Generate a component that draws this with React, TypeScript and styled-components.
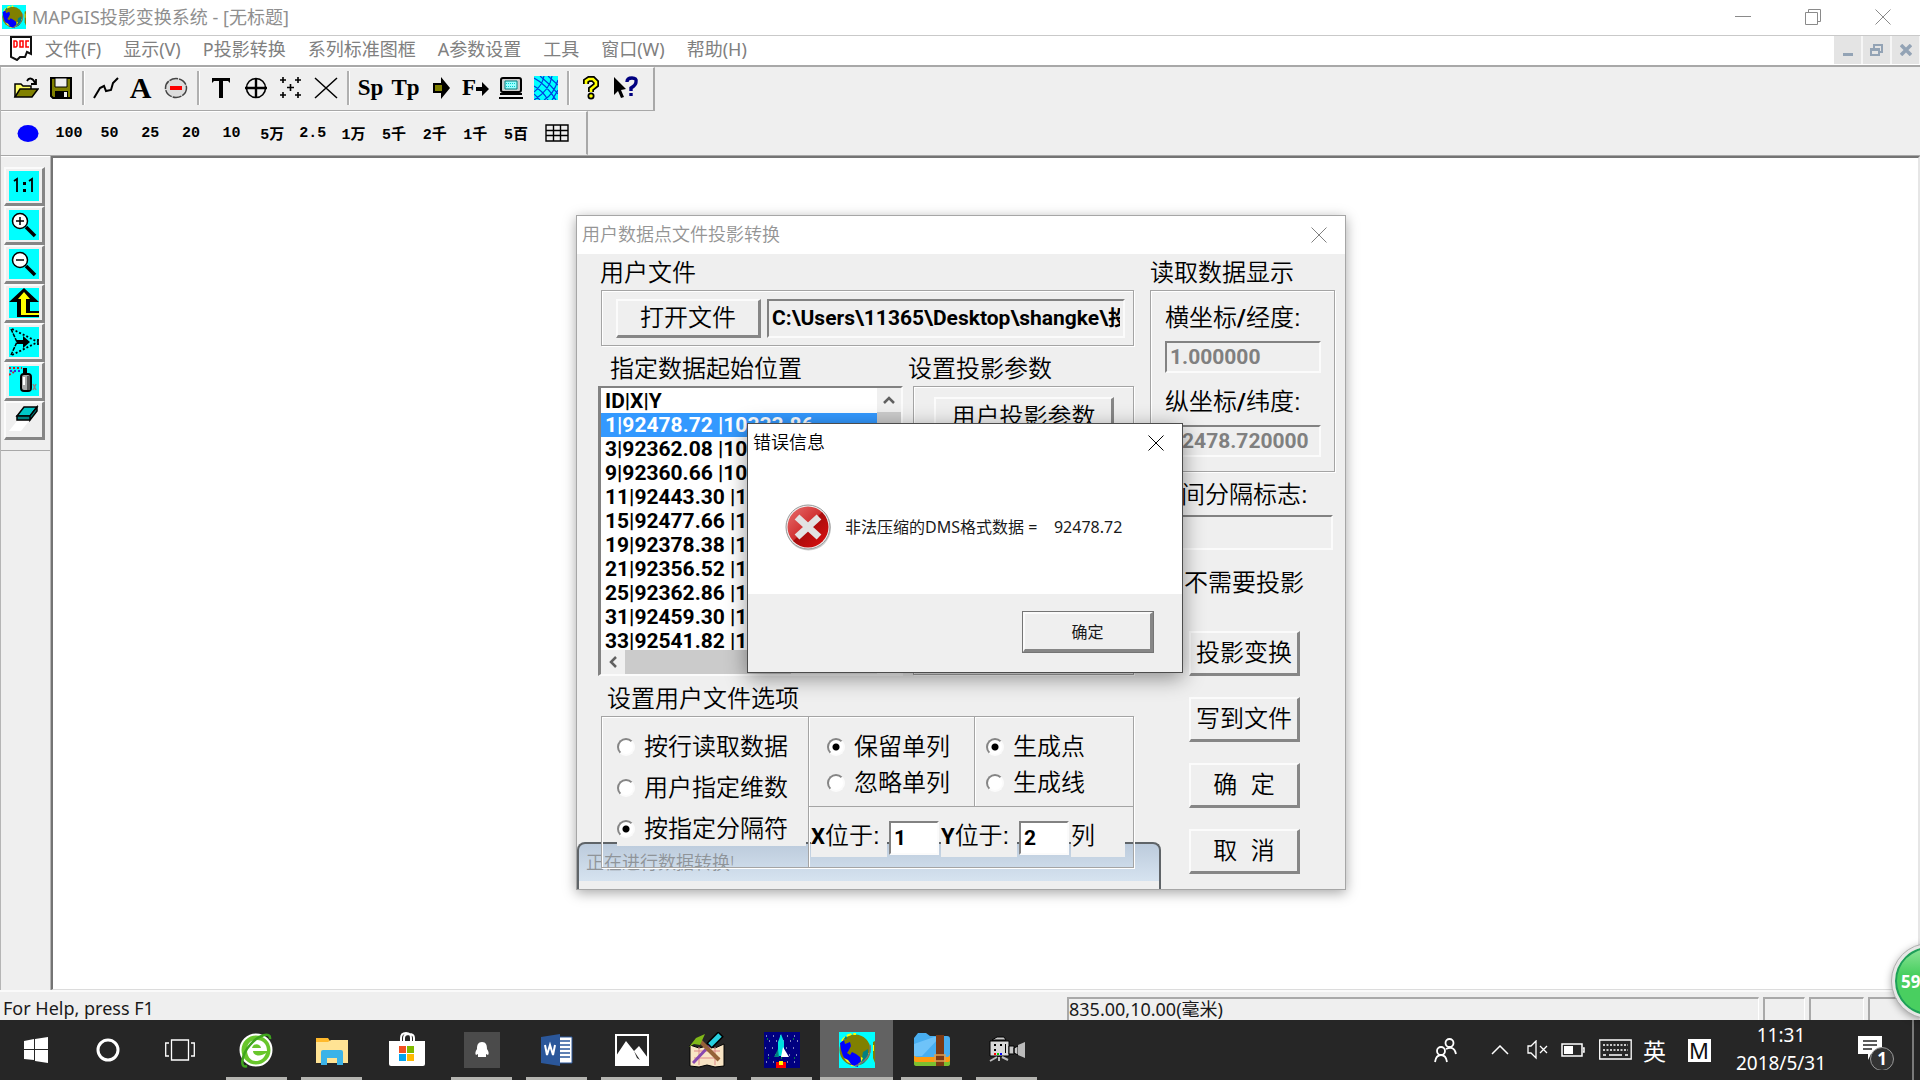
import React from "react";
import styled, { createGlobalStyle, css } from "styled-components";

const FACE = "#efefef";
const UI = `"Noto Sans", "Noto Sans CJK SC", sans-serif`;
const DIALOG = `"Liberation Sans", "Noto Sans CJK SC", sans-serif`;
const BOLD = `Roboto, "Noto Sans CJK SC", sans-serif`;

const Global = createGlobalStyle`
  * { box-sizing: border-box; }
  html, body { margin: 0; height: 100%; overflow: hidden; background: #fff; }
  body { font-family: ${UI}; color: #1a1a1a; }
  button, input { font: inherit; color: inherit; margin: 0; padding: 0; border: 0; background: none; border-radius: 0; }
  svg { display: block; flex: none; }
`;

const etched = css`
  border: 1px solid #a4a4a4;
  box-shadow: inset 1px 1px 0 #fff, 1px 1px 0 #fff;
`;
const raised = css`
  border-style: solid;
  border-width: 2px 3px 3px 2px;
  border-color: #fbfbfb #868686 #868686 #fbfbfb;
`;
const sunken = css`
  border-style: solid;
  border-width: 2px;
  border-color: #828282 #fbfbfb #fbfbfb #828282;
`;

/* ---------- main window ---------- */

const Screen = styled.div`
  position: relative;
  height: 100vh;
  display: flex;
  flex-direction: column;
  overflow: hidden;
`;
const TitleBar = styled.header`
  height: 35px;
  display: flex;
  align-items: center;
  padding: 0 2px 2px;
  gap: 6px;
  font-size: 18px;
  line-height: 26px;
  color: #8f8f8f;
  h1 { margin: 0; flex: 1; font-size: 18px; font-weight: 400; white-space: nowrap; }
`;
const CaptionButtons = styled.div`
  display: flex;
`;
const CaptionButton = styled.button`
  width: 70px;
  height: 33px;
  display: flex;
  align-items: center;
  justify-content: center;
  color: #8a8a8a;
`;
const MenuBar = styled.nav`
  height: 32px;
  display: flex;
  align-items: flex-start;
  border-top: 1px solid #c9c9c9;
  border-bottom: 2px solid #a8a8a8;
  padding-left: 9px;
  background: #fff;
`;
const MenuItems = styled.div`
  flex: 1;
  display: flex;
  gap: 22px;
  padding-left: 12px;
  button { font-size: 18px; line-height: 26px; height: 28px; padding-bottom: 2px; color: #808080; white-space: nowrap; font-weight: 400; }
`;
const MdiButtons = styled.div`
  display: flex;
  gap: 2px;
  padding-right: 1px;
  background: #f6f6f6;
  button {
    width: 27px;
    height: 28px;
    background: #e4e4e4;
    display: flex;
    align-items: center;
    justify-content: center;
  }
`;
const ToolStrip = styled.div`
  background: ${FACE};
  border-left: 1px solid #b5b5b5;
`;
const ToolRow = styled.div<{ $w: number }>`
  width: ${(p) => p.$w}px;
  height: 44px;
  display: flex;
  align-items: center;
  padding: 0 9px 2px 7px;
  border-right: 2px solid #a8a8a8;
  border-top: 1px solid #fff;
  border-bottom: 1px solid #a8a8a8;
`;
const ScaleRow = styled(ToolRow)`
  padding-bottom: 0;
  border-bottom-color: ${FACE};
`;
const ToolButton = styled.button`
  width: 35px;
  height: 34px;
  flex: none;
  display: flex;
  align-items: center;
  justify-content: center;
`;
const GlyphButton = styled(ToolButton)<{ $size: number }>`
  font-family: "Liberation Serif", serif;
  font-weight: 700;
  font-size: ${(p) => p.$size}px;
  line-height: 24px;
  color: #000;
`;
const Separator = styled.span`
  width: 10px;
  height: 34px;
  flex: none;
  display: flex;
  justify-content: center;
  &::before { content: ""; width: 2px; background: #b0b0b0; border-right: 1px solid #fff; }
`;
const ScaleButton = styled.button`
  flex: 1;
  height: 30px;
  display: flex;
  align-items: center;
  justify-content: center;
  font-family: "Liberation Mono", "Noto Sans CJK SC", monospace;
  font-size: 15px;
  font-weight: 700;
  color: #000;
  white-space: nowrap;
`;
const Workspace = styled.div`
  flex: 1;
  min-height: 0;
  display: flex;
  background: ${FACE};
  border-top: 1px solid #a8a8a8;
`;
const SideBar = styled.aside`
  width: 51px;
  border-left: 1px solid #b5b5b5;
  border-right: 1px solid #b5b5b5;
`;
const SideTools = styled.div`
  display: flex;
  flex-direction: column;
  padding: 10px 0 10px 3px;
  border-top: 1px solid #fff;
  border-bottom: 1px solid #a8a8a8;
`;
const SideButton = styled.button<{ $plain?: boolean }>`
  ${raised}
  width: 41px;
  height: 39px;
  display: flex;
  align-items: center;
  justify-content: center;
  svg { background: ${(p) => (p.$plain ? "transparent" : "#00ffff")}; }
`;
const Canvas = styled.main`
  flex: 1;
  background: #fff;
  border-style: solid;
  border-width: 2px 2px 1px 2px;
  border-color: #747474 #e6e6e6 #dcdcdc #747474;
`;
const StatusBar = styled.footer`
  height: 30px;
  display: flex;
  align-items: stretch;
  gap: 4px;
  padding: 5px 0 0 3px;
  background: ${FACE};
  border-top: 2px solid #fafafa;
  font-size: 18px;
  line-height: 23px;
  white-space: nowrap;
`;
const StatusHint = styled.span`
  flex: 1;
`;
const StatusPane = styled.span<{ $w: number }>`
  width: ${(p) => p.$w}px;
  border-top: 2px solid #a9a9a9;
  border-left: 2px solid #a9a9a9;
  border-right: 1px solid #fff;
  line-height: 20px;
`;

/* ---------- taskbar ---------- */

const Taskbar = styled.div`
  height: 60px;
  display: flex;
  background: #262626;
  color: #fff;
  position: relative;
`;
const SystemButton = styled.button`
  width: 72px;
  display: flex;
  align-items: center;
  justify-content: center;
`;
const Apps = styled.div`
  display: flex;
  margin-left: 3px;
  flex: 1;
`;
const AppButton = styled.button<{ $open: boolean; $active?: boolean }>`
  width: 73px;
  margin: 0 1px;
  display: flex;
  flex-direction: column;
  align-items: center;
  justify-content: space-between;
  padding-top: 12px;
  background: ${(p) => (p.$active ? "#626262" : "transparent")};
  &::after {
    content: "";
    width: ${(p) => (p.$active ? 73 : 61)}px;
    height: 3px;
    background: ${(p) => (p.$open ? "#b4b4b0" : "transparent")};
  }
`;
const TrayButton = styled.button<{ $w: number }>`
  width: ${(p) => p.$w}px;
  display: flex;
  align-items: center;
  justify-content: center;
  font-size: 23px;
  color: #fff;
`;
const ImeBadge = styled.span`
  width: 23px;
  height: 23px;
  background: #fff;
  color: #111;
  font-size: 22px;
  line-height: 23px;
  text-align: center;
`;
const Clock = styled.button`
  width: 118px;
  padding-bottom: 2px;
  font-size: 19px;
  line-height: 28px;
  color: #fff;
  span { display: block; }
`;
const ShowDesktop = styled.button`
  width: 8px;
  border-left: 2px solid #7a7a7a;
`;
const SpeedBall = styled.button`
  position: absolute;
  right: -46px;
  bottom: 62px;
  width: 74px;
  height: 74px;
  border-radius: 50%;
  border: 3px solid #e6e6e6;
  outline: 1px solid #b0b0b0;
  background: linear-gradient(#8fe59a 0, #49cf60 40%, #49cf60 100%);
  box-shadow: inset 0 0 0 2px #1f9e5a, 0 2px 8px rgba(0, 0, 0, 0.4);
  color: #fff;
  font-size: 17px;
  font-weight: 700;
  text-align: left;
  padding-left: 6px;
`;

/* ---------- projection dialog ---------- */

const Dialog = styled.section`
  position: absolute;
  left: 576px;
  top: 215px;
  width: 770px;
  background: ${FACE};
  border: 1px solid #a6a6a6;
  box-shadow: 0 3px 12px rgba(0, 0, 0, 0.35);
  font-family: ${DIALOG};
  font-size: 24px;
  font-weight: 350;
  color: #000;
`;
const DialogTitle = styled.header<{ $dim?: boolean }>`
  height: 38px;
  display: flex;
  align-items: center;
  justify-content: space-between;
  padding-left: 5px;
  background: #fff;
  font-family: ${UI};
  color: ${(p) => (p.$dim ? "#959595" : "#000")};
  h2 { margin: 0; font-size: 18px; font-weight: 350; line-height: 24px; padding-bottom: 2px; }
  button { width: 52px; height: 36px; display: flex; align-items: center; justify-content: center; color: ${(p) => (p.$dim ? "#808080" : "#000")}; }
`;
const DialogBody = styled.div`
  position: relative;
  display: flex;
  gap: 16px;
  padding: 0 10px 15px 21px;
`;
const LeftColumn = styled.div`
  width: 536px;
  position: relative;
  z-index: 1;
`;
const RightColumn = styled.div`
  width: 185px;
  display: flex;
  flex-direction: column;
`;
const GroupLabel = styled.div<{ $indent: number; $gap?: boolean }>`
  height: ${(p) => (p.$gap ? 40 : 36)}px;
  padding: ${(p) => (p.$gap ? 4 : 0)}px 0 0 ${(p) => p.$indent}px;
  line-height: 38px;
  white-space: nowrap;
`;
const FileGroup = styled.div`
  ${etched}
  height: 56px;
  margin: 0 0 0 3px;
  padding: 8px 8px 8px 14px;
  display: flex;
  gap: 6px;
`;
const PushButton = styled.button<{ $w: number; $h: number }>`
  ${raised}
  width: ${(p) => p.$w}px;
  height: ${(p) => p.$h}px;
  flex: none;
  line-height: 34px;
  white-space: pre;
`;
const TextBox = styled.input<{ $h: number; $size: number }>`
  && {
    ${sunken}
    height: ${(p) => p.$h}px;
    padding: 0 3px;
    font-family: ${BOLD};
    font-weight: 700;
    font-size: ${(p) => p.$size}px;
    min-width: 0;
    width: 100%;
  }
  &:disabled { color: #808080; -webkit-text-fill-color: #808080; }
`;
const PathBox = styled(TextBox)`
  && { padding-bottom: 6px; }
`;
const Split = styled.div`
  display: grid;
  grid-template-columns: 310px 226px;
`;
const ListBox = styled.div`
  ${sunken}
  border-left-width: 3px;
  width: 305px;
  height: 290px;
  display: grid;
  grid-template: 1fr 24px / 1fr 24px;
  background: #fff;
`;
const ListRows = styled.ul`
  margin: 0;
  padding: 1px 0 0;
  overflow: hidden;
  list-style: none;
  font-family: ${BOLD};
  font-size: 21px;
  font-weight: 700;
  color: #000;
`;
const ListRow = styled.li<{ $on: boolean }>`
  height: 24px;
  line-height: 24px;
  padding-left: 4px;
  white-space: pre;
  background: ${(p) => (p.$on ? "#3399ff" : "#fff")};
  color: ${(p) => (p.$on ? "#fff" : "#000")};
`;
const ScrollTrack = styled.div<{ $row?: boolean }>`
  display: flex;
  flex-direction: ${(p) => (p.$row ? "row" : "column")};
  background: #f0f0f0;
`;
const ScrollArrow = styled.button`
  width: 24px;
  height: 24px;
  flex: none;
  display: flex;
  align-items: center;
  justify-content: center;
  color: #606060;
`;
const ScrollThumb = styled.span`
  flex: 0 0 60%;
  background: #cbcbcb;
`;
const ParamGroup = styled.div`
  ${etched}
  height: 289px;
  margin-left: 5px;
  padding: 10px 0 0 20px;
`;
const OptionsGroup = styled.div`
  ${etched}
  height: 152px;
  margin-left: 3px;
  display: grid;
  grid-template-columns: 206px 1fr;
`;
const OptionsRight = styled.div`
  border-left: 1px solid #a4a4a4;
  box-shadow: inset 1px 0 0 #fff;
  display: grid;
  grid-template-rows: 90px 1fr;
`;
const OptionsTop = styled.div`
  display: grid;
  grid-template-columns: 165px 1fr;
  border-bottom: 1px solid #a4a4a4;
  > div + div { border-left: 1px solid #a4a4a4; box-shadow: inset 1px 0 0 #fff; }
`;
const RadioList = styled.div<{ $gap: number; $pad: number }>`
  display: flex;
  flex-direction: column;
  gap: ${(p) => p.$gap}px;
  padding: 13px 2px 0 ${(p) => p.$pad}px;
`;
const RadioLabel = styled.label`
  display: flex;
  align-items: center;
  gap: 9px;
  height: 34px;
  background: ${FACE};
  line-height: 34px;
  white-space: nowrap;
`;
const Radio = styled.input`
  && {
    appearance: none;
    width: 18px;
    height: 18px;
    flex: none;
    border-radius: 50%;
    border: 2px solid;
    border-color: #858585 #fbfbfb #fbfbfb #858585;
    background: #fff;
  }
  &&:checked { background: radial-gradient(circle, #000 0 3px, #fff 4px); }
`;
const AxisRow = styled.div`
  display: flex;
  align-items: flex-start;
  gap: 2px;
  padding: 12px 0 0 2px;
  label, span { height: 38px; line-height: 34px; background: ${FACE}; white-space: nowrap; }
  label { width: 76px; }
  span { width: 54px; }
  b { font-family: ${BOLD}; font-size: 22px; font-weight: 700; }
`;
const AxisInput = styled(TextBox)`
  && { width: 50px; margin-top: 2px; background: #fff; flex: none; color: #000; }
`;
const ProgressWindow = styled.div`
  position: absolute;
  left: 0;
  bottom: 0;
  width: 584px;
  height: 47px;
  border: 1px solid #5f6468;
  border-width: 2px 2px 0 2px;
  border-radius: 8px 8px 0 0;
  background: linear-gradient(#bccbdc 0, #d6e3f0 37px, ${FACE} 37px);
  padding: 6px 0 0 7px;
  font-family: ${UI};
  font-size: 18px;
  line-height: 24px;
  color: #8f9499;
`;
const CoordGroup = styled.div`
  ${etched}
  height: 182px;
  padding: 8px 13px 0 14px;
  display: flex;
  flex-direction: column;
  gap: 10px;
`;
const Field = styled.div`
  display: flex;
  flex-direction: column;
  gap: 6px;
  label { height: 36px; line-height: 38px; white-space: nowrap; }
  b { font-family: ${BOLD}; font-weight: 700; }
`;
const SeparatorField = styled(Field)`
  gap: 2px;
  padding: 5px 2px 0 12px;
  label { padding-left: 19px; line-height: 36px; }
`;
const SkipLabel = styled.label`
  display: flex;
  align-items: center;
  gap: 6px;
  height: 36px;
  margin: 15px 0 30px;
  padding-left: 14px;
  line-height: 36px;
  white-space: nowrap;
  input { width: 14px; height: 14px; }
`;
const Actions = styled.div`
  display: flex;
  flex-direction: column;
  gap: 21px;
  padding-left: 39px;
`;

/* ---------- error box ---------- */

const ErrorBox = styled.section`
  position: absolute;
  left: 747px;
  top: 423px;
  width: 436px;
  background: #fff;
  border: 1px solid #4c4c4c;
  box-shadow: 0 5px 20px rgba(0, 0, 0, 0.42);
  z-index: 2;
`;
const ErrorContent = styled.div`
  height: 132px;
  display: flex;
  align-items: center;
  gap: 13px;
  padding: 0 0 2px 36px;
  font-size: 16px;
  line-height: 24px;
  white-space: pre;
`;
const ErrorFooter = styled.div`
  height: 78px;
  display: flex;
  justify-content: flex-end;
  padding: 18px 29px 0 0;
  background: ${FACE};
`;
const OkButton = styled.button`
  ${raised}
  outline: 1px solid #757575;
  width: 130px;
  height: 40px;
  font-size: 16px;
  line-height: 24px;
`;

/* ---------- drawings ---------- */

const CloseGlyph = ({ s = 16 }: { s?: number }) => (
  <svg width={s} height={s} viewBox="0 0 16 16" stroke="currentColor" fill="none"><path d="M.5.5l15 15M15.5.5l-15 15" /></svg>
);
const Globe = ({ w, h }: { w: number; h: number }) => (
  <svg width={w} height={h} viewBox="0 0 36 36" preserveAspectRatio="none">
    <path fill="#00ffff" d="M0 0h36v36H0z" />
    <circle cx="16" cy="18" r="15.500" fill="#808000" />
    <path fill="none" stroke="#ffff00" strokeWidth="2" strokeDasharray="5 2" d="M3 9Q8 1 17 2M12 33q12 2 17-12" />
    <path fill="#0000ff" d="M1 11l4-3 1 4 5-2 1 4-2 4-2 3 3 2 2-3 4 2 4 3 1 4-3 3 0 3-6-2-5-3-4-6-2-6z" />
    <path fill="#008080" d="M24 20l5-3 0 8-4 6-4 2 2-7zM4 8l3-4 1 3z" />
    <path fill="#ffff00" d="M5 26l4 2 3 4-4-2zM22 25l2 1-2 4z" />
    <path fill="none" stroke="#777" strokeWidth="1.500" d="M31 13c2 9-5 18-15 21" />
    <path fill="#808000" d="M34 10l2-1v22l-2-5z" /><path fill="#ffff00" d="M34 13h1v6h-1z" />
  </svg>
);
const OpenIcon = () => (
  <svg width="26" height="24" viewBox="0 0 26 24">
    <path fill="#ffff66" stroke="#000" strokeWidth="1.5" d="M2 21V8h6l2 2h8v4" />
    <path fill="#808000" stroke="#000" strokeWidth="1.5" d="M2 21l5-8h18l-6 8z" />
    <path fill="none" stroke="#000" strokeWidth="1.8" d="M14 5c2-4 6-3 8 2M23 3v5h-5" />
  </svg>
);
const SaveIcon = () => (
  <svg width="24" height="24" viewBox="0 0 24 24">
    <path fill="#808000" stroke="#000" strokeWidth="2" d="M2 2h20v20H4l-2-2z" />
    <path fill="#efefef" stroke="#000" d="M6 2h12v9H6z" /><path fill="#000" d="M6 15h13v7H6z" /><path fill="#efefef" d="M15 16h3v5h-3z" />
  </svg>
);
const PolyIcon = () => (
  <svg width="26" height="26" viewBox="0 0 26 26" fill="none" stroke="#000" strokeWidth="2"><path d="M1 23l6-10 4-2 2 5 5-1 2-7 5-5" /></svg>
);
const MinusIcon = () => (
  <svg width="26" height="24" viewBox="0 0 26 24">
    <ellipse cx="13" cy="12" rx="10.500" ry="9.500" fill="#ddd" stroke="#444" strokeWidth="1.5" strokeDasharray="9 1" /><path fill="red" d="M7 10h12v4H7z" />
  </svg>
);
const TIcon = () => (
  <svg width="22" height="22" viewBox="0 0 22 22"><path d="M2 1h18v5l-2-2h-5v17H9V4H4L2 6z" /></svg>
);
const TargetIcon = () => (
  <svg width="24" height="22" viewBox="0 0 24 22" fill="none" stroke="#000"><ellipse cx="12" cy="11" rx="9.5" ry="9.5" strokeWidth="1.6" /><path strokeWidth="2.4" d="M12 1v20M1 11h22" /></svg>
);
const PlusesIcon = () => (
  <svg width="26" height="24" viewBox="0 0 26 24" stroke="#000" strokeWidth="1.6">
    <path d="M5 1v6M2 4h6M20 1v6M17 4h6M12.500 8v7M9 11.500h7M5 16v6M2 19h6M20 16v6M17 19h6" />
  </svg>
);
const CrossIcon = () => (
  <svg width="24" height="22" viewBox="0 0 24 22" stroke="#000" strokeWidth="1.5"><path d="M1 1l22 20M23 1L1 21" /></svg>
);
const ArrowIcon = () => (
  <svg width="20" height="22" viewBox="0 0 20 22"><path d="M2 6h8V0l9 11-9 11v-6H2z" /><path fill="#808000" d="M4 8h7v6H4z" /></svg>
);
const SmallArrow = () => (
  <svg width="13" height="16" viewBox="0 0 13 16"><path d="M0 7h6V2l7 7-7 7v-5H0z" /></svg>
);
const MonitorIcon = () => (
  <svg width="26" height="24" viewBox="0 0 26 24">
    <rect x="3" y="2" width="20" height="14" rx="2" fill="#ccc" stroke="#000" strokeWidth="2" />
    <path fill="#9ff" stroke="#008080" d="M7 5h12v8H7z" /><path stroke="#0cc" strokeDasharray="1 1" d="M8 7.500h10M8 10.500h10" /><path d="M2 17h22v2H2zM1 21h24v2H1z" />
  </svg>
);
const HatchIcon = () => (
  <svg width="24" height="24" viewBox="0 0 24 24">
    <path fill="#00ffff" d="M0 0h24v24H0z" />
    <path stroke="#0040e0" strokeWidth="1.200" fill="none" d="M0 2q12 6 22 22M6 0q10 8 18 18M14 0l10 9M0 10q9 5 14 14M0 18l6 6M10 0Q8 10 0 16M18 0Q16 14 0 24M24 4Q20 18 10 24M24 14l-6 10" />
  </svg>
);
const HelpIcon = () => (
  <svg width="18" height="24" viewBox="0 0 18 24">
    <path fill="none" stroke="#000" strokeWidth="6" d="M4 8V5l3-2h4l3 3v3l-5 4v3" /><circle cx="9" cy="20" r="3.500" />
    <path fill="none" stroke="#ff0" strokeWidth="2.600" d="M4 8V5l3-2h4l3 3v3l-5 4v3" /><circle cx="9" cy="20" r="1.800" fill="#ff0" />
  </svg>
);
const ContextHelpIcon = () => (
  <svg width="26" height="24" viewBox="0 0 26 24">
    <path d="M1 1l12 12-5 1 3 7-3 1-3-7-4 4z" /><path fill="none" stroke="#000080" strokeWidth="3.400" d="M14 6q0-4 5-4t4 4q0 3-5 6v3M18 17v3" />
  </svg>
);
const TableIcon = () => (
  <svg width="24" height="18" viewBox="0 0 24 18" fill="none" stroke="#000" strokeWidth="1.400"><path d="M1 1h22v16H1zM1 6.500h22M1 11.500h22M8.500 1v16M15.500 1v16" /></svg>
);
const Magnifier = ({ plus }: { plus?: boolean }) => (
  <svg width="30" height="30" viewBox="0 0 30 30">
    <path stroke="#000" strokeWidth="3.500" d="M17 17l9 9" /><circle cx="11" cy="11" r="7.500" fill="#fff" stroke="#000" strokeWidth="1.5" />
    <path stroke="#000" strokeWidth="1.5" d={plus ? "M7 11h8M11 7v8" : "M7 11h8"} />
  </svg>
);
const sideIcons: [string, React.ReactNode][] = [
  ["1:1", <svg width="30" height="30" viewBox="0 0 30 30"><path fill="none" stroke="#000" strokeWidth="1.800" d="M5 10l3-2v13M20 10l3-2v13" /><path d="M14 11h3v3h-3zM14 18h3v3h-3z" /></svg>],
  ["放大", <Magnifier plus />],
  ["缩小", <Magnifier />],
  ["上级", <svg width="30" height="30" viewBox="0 0 30 30"><path d="M15 0l15 14h-9v9h9v6H8V14H0z" /><path fill="#ff0" d="M15 4l6 7h-4v14h13v2H12V11H9z" /></svg>],
  ["移动", <svg width="30" height="30" viewBox="0 0 30 30"><path fill="none" stroke="#000" strokeWidth="1.8" strokeDasharray="2 2" d="M3 2l26 13L3 28M29 12v6" /><path fill="none" stroke="#000" strokeWidth="1.5" strokeDasharray="4 1" d="M2 2l6 13-6 13" /><path d="M8 13h6V9l7 6-7 6v-4H8z" /></svg>],
  ["喷涂", <svg width="30" height="30" viewBox="0 0 30 30"><path stroke="#d02020" strokeWidth="2" strokeDasharray="2 2" d="M0 2h13M0 9l5-3" /><path stroke="#3030e0" strokeWidth="2" strokeDasharray="2 2" d="M1 5h10" /><rect x="12" y="8" width="10" height="17" rx="3" fill="#aaa" stroke="#000" strokeWidth="2" /><path d="M14 2h4v6h-4z" /><path fill="#fff" d="M14 11h2v8h-2z" /><path fill="#555" d="M18 10h3v14h-3z" /><path stroke="#888" strokeWidth="1.5" d="M24 18l3 6M27 18l-3 6" /></svg>],
  ["擦除", <svg width="30" height="30" viewBox="0 0 30 30"><path fill="#fff" d="M0 26l8-10h12l-8 10z" /><path fill="#00c8c8" stroke="#000" strokeWidth="1.5" d="M8 11l7-9h13l-7 9z" /><path fill="#008080" stroke="#000" strokeWidth="1.5" d="M8 11h13v4H8zM21 11l7-9v4l-7 9z" /></svg>],
];
const ErrorIcon = () => (
  <svg width="48" height="48" viewBox="0 0 48 48">
    <defs>
      <linearGradient id="err" x1="0" y1="0" x2="1" y2="1"><stop offset="0" stopColor="#e87070" /><stop offset=".48" stopColor="#d03030" /><stop offset=".5" stopColor="#a80c0c" /><stop offset="1" stopColor="#e01010" /></linearGradient>
    </defs>
    <circle cx="24.500" cy="25" r="22.500" fill="#999" opacity=".5" /><circle cx="24" cy="24" r="22" fill="#eee" stroke="#999" /><circle cx="24" cy="24" r="20.500" fill="url(#err)" />
    <path stroke="#e2e2e2" strokeWidth="7" d="M13 14l22 20M35 14L13 34" />
  </svg>
);

const appIcons: { name: string; open: boolean; active?: boolean; icon: React.ReactNode }[] = [
  { name: "360浏览器", open: true, icon: <svg width="36" height="36" viewBox="0 0 36 36"><circle cx="17" cy="18" r="15.500" fill="#68c62c" stroke="#fff" strokeWidth="2" /><path fill="#fff" d="M8 18c0-7 4-10 10-10 6 0 10 4 10 11H14c0 5 8 6 13 2-2 6-6 8-10 8-6 0-9-5-9-11z" /><path fill="#68c62c" d="M13 16c1-5 8-5 9 0z" /><path fill="none" stroke="#3ea51e" strokeWidth="2.500" d="M31 7c1-8-12-4-20 6C3 22 0 37 8 34" /></svg> },
  { name: "文件资源管理器", open: true, icon: <svg width="36" height="36" viewBox="0 0 36 36"><path fill="#ffb92c" d="M2 6h12l2 3h18v8H2z" /><path fill="#ffe394" d="M2 10h12l3-2h17v23H2z" /><path fill="#3bb3e8" d="M7 33V20q0-2 2-2h18q2 0 2 2v13h-6v-7H13v7z" /></svg> },
  { name: "应用商店", open: false, icon: <svg width="36" height="36" viewBox="0 0 36 36"><path fill="none" stroke="#fff" strokeWidth="2" d="M12 10V6q0-5 5-5t5 5v4M15 10V6q0-4 5-4t5 4v4" /><path fill="#fff" d="M0 9h36v23q0 2-2 2H2q-2 0-2-2z" /><path fill="#f25022" d="M10 14h7v7h-7z" /><path fill="#7fba00" d="M18 14h7v7h-7z" /><path fill="#00a4ef" d="M10 22h7v7h-7z" /><path fill="#ffb900" d="M18 22h7v7h-7z" /></svg> },
  { name: "QQ", open: true, icon: <svg width="36" height="36" viewBox="0 0 36 36"><path fill="#4b4b4b" d="M0 0h36v36H0z" /><path fill="#fff" d="M18 10c4 0 5 3 5 7 2 3 2 5 1 6l-2-1v3H14v-3l-2 1c-1-1-1-3 1-6 0-4 1-7 5-7z" /></svg> },
  { name: "Word", open: true, icon: <svg width="36" height="36" viewBox="0 0 36 36"><path fill="#fff" stroke="#2b579a" d="M18 5h15v26H18z" /><path stroke="#2b579a" strokeWidth="1.5" d="M20 9h11M20 13h11M20 17h11M20 21h11M20 25h11" /><path fill="#2b579a" d="M2 5l19-3v32L2 31z" /><path fill="none" stroke="#fff" strokeWidth="2" d="M6 13l2 10 3-10 3 10 2-10" /></svg> },
  { name: "照片", open: true, icon: <svg width="36" height="36" viewBox="0 0 36 36"><path fill="none" stroke="#fff" strokeWidth="2" d="M2 3h32v30H2z" /><path fill="#fff" d="M2 24L12 9l8 10 5-5 9 12v8H2z" /><path fill="#262626" d="M20 19l6 9-3-2z" /></svg> },
  { name: "地图工具", open: true, icon: <svg width="36" height="36" viewBox="0 0 36 36"><path fill="#f8e4c4" stroke="#000" d="M1 13l9 3 8-2 8 2 9-4v22l-9 1-8-2-8 2-9-1z" /><path stroke="#d88" d="M5 19h26M5 26h26M10 15v18M26 15v18" /><path stroke="#8848b0" strokeWidth="3" d="M4 31L21 13" /><path stroke="#000" strokeWidth="8" d="M20 14L32 2" /><path stroke="#28d0e0" strokeWidth="5" d="M21 13L31 3" /><path stroke="#966238" strokeWidth="4" d="M10 8l20 20" /><path fill="#80b818" d="M0 15l7-9 9-4-5 11-6-1z" /></svg> },
  { name: "MAPGIS主菜单", open: true, icon: <svg width="36" height="36" viewBox="0 0 36 36"><path fill="#000080" d="M0 0h36v36H0z" /><path stroke="#fff" strokeDasharray="1 6" d="M2 4h34M5 9h30M1 16h34M4 23h30M2 30h32" /><path stroke="#0f0" strokeDasharray="1 12" d="M3 7h30M4 26h30" /><path fill="#00e0e0" d="M17 2l3 8v14h-6V10z" /><path fill="#fff" d="M19 15l6 10h-8z" /><path fill="#008080" d="M14 17l-4 8h5z" /><path fill="#f00" d="M12 30h10v6H12z" /><path fill="#ff0" d="M15 29h4v4h-4z" /></svg> },
  { name: "投影变换", open: true, active: true, icon: <Globe w={36} h={36} /> },
  { name: "压缩", open: true, icon: <svg width="36" height="36" viewBox="0 0 36 36"><path fill="#7cc030" d="M0 26h36v6q0 2-3 2H3q-3 0-3-2z" /><path fill="#ff9a10" d="M0 22h36v6q0 2-3 2H3q-3 0-3-2z" /><path fill="#48aef0" d="M0 6l4-5h8l4 3h17q3 0 3 3v14q0 4-3 4H3q-3 0-3-4z" /><path fill="#88d0ff" d="M0 12L20 5h6L8 24H0z" opacity=".6" /><path fill="#7c3a14" d="M22 3h8v31h-8z" /><path fill="none" stroke="#e0a050" strokeWidth="1.500" d="M21 23h10v6H21z" /></svg> },
  { name: "录像", open: true, icon: <svg width="36" height="36" viewBox="0 0 36 36"><path fill="#d8d8d8" stroke="#000" d="M1 9h19v15H1z" /><path fill="#c8c8c8" stroke="#000" d="M3 8l5-3h7l2 3zM20 14h5v8h-5zM25 16l4-2v9l-4-2z" /><path fill="#bbb" d="M29 13l7-3v16l-7-3z" /><path d="M5 12h2v2H5zM11 12h2v2h-2zM5 17h2v2H5zM16 12h1v9h-1z" /><path fill="#f00" d="M5 21h2v2H5z" /><path fill="#0c0" d="M8 21h2v2H8z" /><path fill="#00f" d="M11 21h2v2h-2z" /><path stroke="#bbb" strokeWidth="2" d="M8 25l-7 4M10 25v4M13 25l6 3" /></svg> },
];

const toolGroups: [string, React.ReactNode][][] = [
  [["打开", <OpenIcon />], ["保存", <SaveIcon />]],
  [["线", <PolyIcon />], ["A", "A"], ["删除", <MinusIcon />]],
  [["文字", <TIcon />], ["定位", <TargetIcon />], ["点阵", <PlusesIcon />], ["清除", <CrossIcon />]],
  [["Sp", "Sp"], ["Tp", "Tp"], ["执行", <ArrowIcon />], ["F", <>F<SmallArrow /></>], ["屏幕", <MonitorIcon />], ["图案", <HatchIcon />]],
  [["帮助", <HelpIcon />], ["上下文帮助", <ContextHelpIcon />]],
];
const scales = ["100", "50", "25", "20", "10", "5万", "2.5", "1万", "5千", "2千", "1千", "5百"];
const menus = ["文件(F)", "显示(V)", "P投影转换", "系列标准图框", "A参数设置", "工具", "窗口(W)", "帮助(H)"];
const rows = ["ID|X|Y", "1|92478.72 |10333.86", "3|92362.08 |10", "9|92360.66 |10", "11|92443.30 |1", "15|92477.66 |1", "19|92378.38 |1", "21|92356.52 |1", "25|92362.86 |1", "31|92459.30 |1", "33|92541.82 |1"];

const Choices = ({ name, items, on, gap, pad }: { name: string; items: string[]; on: number; gap: number; pad: number }) => (
  <RadioList $gap={gap} $pad={pad}>
    {items.map((t, i) => (
      <RadioLabel key={t}><Radio type="radio" name={name} defaultChecked={i === on} />{t}</RadioLabel>
    ))}
  </RadioList>
);

function ProjectionDialog() {
  return (
    <Dialog role="dialog" aria-label="用户数据点文件投影转换">
      <DialogTitle $dim><h2>用户数据点文件投影转换</h2><button aria-label="关闭"><CloseGlyph /></button></DialogTitle>
      <DialogBody>
        <LeftColumn>
          <GroupLabel $indent={2}>用户文件</GroupLabel>
          <FileGroup>
            <PushButton $w={145} $h={39}>打开文件</PushButton>
            <PathBox $h={39} $size={21} aria-label="文件路径" readOnly defaultValue="C:\Users\11365\Desktop\shangke\投" />
          </FileGroup>
          <Split>
            <GroupLabel $indent={12} $gap>指定数据起始位置</GroupLabel>
            <GroupLabel $indent={0} $gap>设置投影参数</GroupLabel>
            <ListBox>
              <ListRows role="listbox" aria-label="指定数据起始位置">
                {rows.map((r, i) => <ListRow key={r} role="option" aria-selected={i === 1} $on={i === 1}>{r}</ListRow>)}
              </ListRows>
              <ScrollTrack>
                <ScrollArrow aria-label="向上"><svg width="12" height="10" viewBox="0 0 12 10" fill="none" stroke="currentColor" strokeWidth="2.500"><path d="M1 8l5-5 5 5" /></svg></ScrollArrow>
                <ScrollThumb />
              </ScrollTrack>
              <ScrollTrack $row>
                <ScrollArrow aria-label="向左"><svg width="10" height="12" viewBox="0 0 10 12" fill="none" stroke="currentColor" strokeWidth="2.500"><path d="M8 1L3 6l5 5" /></svg></ScrollArrow>
                <ScrollThumb />
              </ScrollTrack>
            </ListBox>
            <ParamGroup><PushButton $w={180} $h={40}>用户投影参数</PushButton></ParamGroup>
          </Split>
          <GroupLabel $indent={9} $gap>设置用户文件选项</GroupLabel>
          <OptionsGroup>
            <Choices name="read" items={["按行读取数据", "用户指定维数", "按指定分隔符"]} on={2} gap={7} pad={15} />
            <OptionsRight>
              <OptionsTop>
                <Choices name="single" items={["保留单列", "忽略单列"]} on={0} gap={2} pad={18} />
                <Choices name="shape" items={["生成点", "生成线"]} on={0} gap={2} pad={11} />
              </OptionsTop>
              <AxisRow>
                <label htmlFor="xcol"><b>X</b>位于:</label>
                <AxisInput id="xcol" $h={34} $size={21} defaultValue="1" />
                <label htmlFor="ycol"><b>Y</b>位于:</label>
                <AxisInput id="ycol" $h={34} $size={21} defaultValue="2" />
                <span>列</span>
              </AxisRow>
            </OptionsRight>
          </OptionsGroup>
        </LeftColumn>
        <RightColumn>
          <GroupLabel $indent={0}>读取数据显示</GroupLabel>
          <CoordGroup>
            <Field><label htmlFor="east">横坐标<b>/</b>经度:</label><TextBox id="east" $h={32} $size={21} disabled defaultValue="1.000000" /></Field>
            <Field><label htmlFor="north">纵坐标<b>/</b>纬度:</label><TextBox id="north" $h={32} $size={21} disabled defaultValue="92478.720000" /></Field>
          </CoordGroup>
          <SeparatorField><label htmlFor="sep">间分隔标志:</label><TextBox id="sep" $h={35} $size={21} /></SeparatorField>
          <SkipLabel><input type="checkbox" />不需要投影</SkipLabel>
          <Actions>
            {["投影变换", "写到文件", "确  定", "取  消"].map((t) => <PushButton key={t} $w={111} $h={45}>{t}</PushButton>)}
          </Actions>
        </RightColumn>
        <ProgressWindow>正在进行数据转换!</ProgressWindow>
      </DialogBody>
    </Dialog>
  );
}

export default function App() {
  return (
    <Screen>
      <Global />
      <TitleBar>
        <Globe w={24} h={24} />
        <h1>MAPGIS投影变换系统 - [无标题]</h1>
        <CaptionButtons>
          <CaptionButton aria-label="最小化"><svg width="16" height="2"><path fill="currentColor" d="M0 0h16v1H0z" /></svg></CaptionButton>
          <CaptionButton aria-label="还原"><svg width="16" height="16" fill="none" stroke="currentColor"><path d="M.5 3.500h12v12H.5zM3.500 3.500v-3h12v12h-3" /></svg></CaptionButton>
          <CaptionButton aria-label="关闭"><CloseGlyph /></CaptionButton>
        </CaptionButtons>
      </TitleBar>
      <MenuBar>
        <svg width="24" height="25" viewBox="0 0 24 25"><path fill="#fff" stroke="#111" strokeWidth="2" d="M2 1h20v17l-4-2-2 5-5 0-3 3-6-3z" /><path fill="none" stroke="#f00" strokeWidth="1.5" d="M5 5v6h2l1-1V6L7 5zM11 5h3v6h-3zM20 5h-3v6h3" /></svg>
        <MenuItems>{menus.map((m) => <button key={m}>{m}</button>)}</MenuItems>
        <MdiButtons>
          <button aria-label="最小化窗口"><svg width="12" height="12"><path fill="#93a3b5" d="M1 9h10v3H1z" /></svg></button>
          <button aria-label="还原窗口"><svg width="14" height="14" fill="none" stroke="#93a3b5" strokeWidth="2"><path d="M1 6h8v6H1zM1 7h8M4 5V2h8v7h-2" /></svg></button>
          <button aria-label="关闭窗口"><svg width="12" height="12" stroke="#93a3b5" strokeWidth="3.500"><path d="M1 1l10 10M11 1L1 11" /></svg></button>
        </MdiButtons>
      </MenuBar>
      <ToolStrip>
        <ToolRow $w={654}>
          {toolGroups.map((g, gi) => (
            <React.Fragment key={gi}>
              {gi > 0 && <Separator />}
              {g.map(([name, icon]) =>
                typeof icon === "string" || name === "F"
                  ? <GlyphButton key={name} $size={name === "A" ? 30 : 23}>{icon}</GlyphButton>
                  : <ToolButton key={name} aria-label={name}>{icon}</ToolButton>
              )}
            </React.Fragment>
          ))}
        </ToolRow>
        <ScaleRow $w={587}>
          <ScaleButton aria-label="点"><svg width="22" height="17"><ellipse cx="11" cy="8.500" rx="10.500" ry="8.500" fill="#00f" /></svg></ScaleButton>
          {scales.map((s) => <ScaleButton key={s}>{s}</ScaleButton>)}
          <ScaleButton aria-label="表格"><TableIcon /></ScaleButton>
        </ScaleRow>
      </ToolStrip>
      <Workspace>
        <SideBar>
          <SideTools>
            {sideIcons.map(([name, icon]) => <SideButton key={name} aria-label={name} $plain={name === "擦除"}>{icon}</SideButton>)}
          </SideTools>
        </SideBar>
        <Canvas />
      </Workspace>
      <StatusBar>
        <StatusHint>For Help, press F1</StatusHint>
        <StatusPane $w={692}>835.00,10.00(毫米)</StatusPane>
        <StatusPane $w={42} /><StatusPane $w={55} /><StatusPane $w={52} />
      </StatusBar>
      <Taskbar>
        <SystemButton aria-label="开始"><svg width="26" height="26" viewBox="0 0 26 26" fill="#fff"><path d="M1 4l10-2v10H1zM12 2l13-2v12H12zM1 13h10v10L1 22zM12 13h13v13l-13-2z" /></svg></SystemButton>
        <SystemButton aria-label="Cortana"><svg width="24" height="24"><circle cx="12" cy="12" r="10" fill="none" stroke="#fff" strokeWidth="3" /></svg></SystemButton>
        <SystemButton aria-label="任务视图"><svg width="30" height="22" fill="none" stroke="#fff" strokeWidth="1.300"><path d="M6.500 1h17v20h-17zM4 4H.700v13H4M26 4h3.300v13H26" /></svg></SystemButton>
        <Apps>
          {appIcons.map((a) => <AppButton key={a.name} aria-label={a.name} $open={a.open} $active={a.active}>{a.icon}</AppButton>)}
        </Apps>
        <TrayButton $w={56} aria-label="人脉"><svg width="24" height="26" fill="none" stroke="#fff" strokeWidth="1.800"><circle cx="16.500" cy="6" r="4" /><circle cx="8" cy="14" r="4" /><path d="M2 25q1-7 6-7t6 7M13 12q8-4 10 5" /></svg></TrayButton>
        <TrayButton $w={54} aria-label="显示隐藏的图标"><svg width="18" height="10" fill="none" stroke="#fff" strokeWidth="1.500"><path d="M1 9l8-8 8 8" /></svg></TrayButton>
        <TrayButton $w={22} aria-label="静音"><svg width="22" height="20" fill="none" stroke="#fff" strokeWidth="1.300"><path d="M1 6v7h3l5 5V1L4 6zM13 6l7 7M20 6l-7 7" /></svg></TrayButton>
        <TrayButton $w={48} aria-label="电池"><svg width="24" height="14" fill="none" stroke="#fff" strokeWidth="1.500"><path d="M1 1h20v12H1zM22 5h1v4h-1" /><path fill="#fff" stroke="none" d="M3 3h9v8H3z" /></svg></TrayButton>
        <TrayButton $w={36} aria-label="触摸键盘"><svg width="33" height="24" fill="none" stroke="#fff" strokeWidth="1.300"><path d="M.700 2h31.500v19H.700z" /><path strokeDasharray="2 1.500" d="M4 7h25M4 12h25" /><path d="M4 17h3M10 17h13M26 17h3" /></svg></TrayButton>
        <TrayButton $w={43}>英</TrayButton>
        <TrayButton $w={46}><ImeBadge>M</ImeBadge></TrayButton>
        <Clock><span>11:31</span><span>2018/5/31</span></Clock>
        <TrayButton $w={72} aria-label="通知 1">
          <svg width="38" height="40" viewBox="0 0 38 40"><path fill="#fff" d="M1 6h24v18H14l-3 6v-6H1z" /><path stroke="#262626" strokeWidth="1.500" d="M6 11h14M6 15h14M6 19h9" /><circle cx="25" cy="29" r="11.500" fill="#333" stroke="#999" /><text x="25" y="35" fill="#fff" fontFamily="Noto Sans" fontSize="17" fontWeight="700" textAnchor="middle">1</text></svg>
        </TrayButton>
        <ShowDesktop aria-label="显示桌面" />
      </Taskbar>
      <ProjectionDialog />
      <ErrorBox role="alertdialog" aria-label="错误信息">
        <DialogTitle><h2>错误信息</h2><button aria-label="关闭错误信息"><CloseGlyph /></button></DialogTitle>
        <ErrorContent><ErrorIcon /><span>{"非法压缩的DMS格式数据 =    92478.72"}</span></ErrorContent>
        <ErrorFooter><OkButton>确定</OkButton></ErrorFooter>
      </ErrorBox>
      <SpeedBall>59</SpeedBall>
    </Screen>
  );
}
